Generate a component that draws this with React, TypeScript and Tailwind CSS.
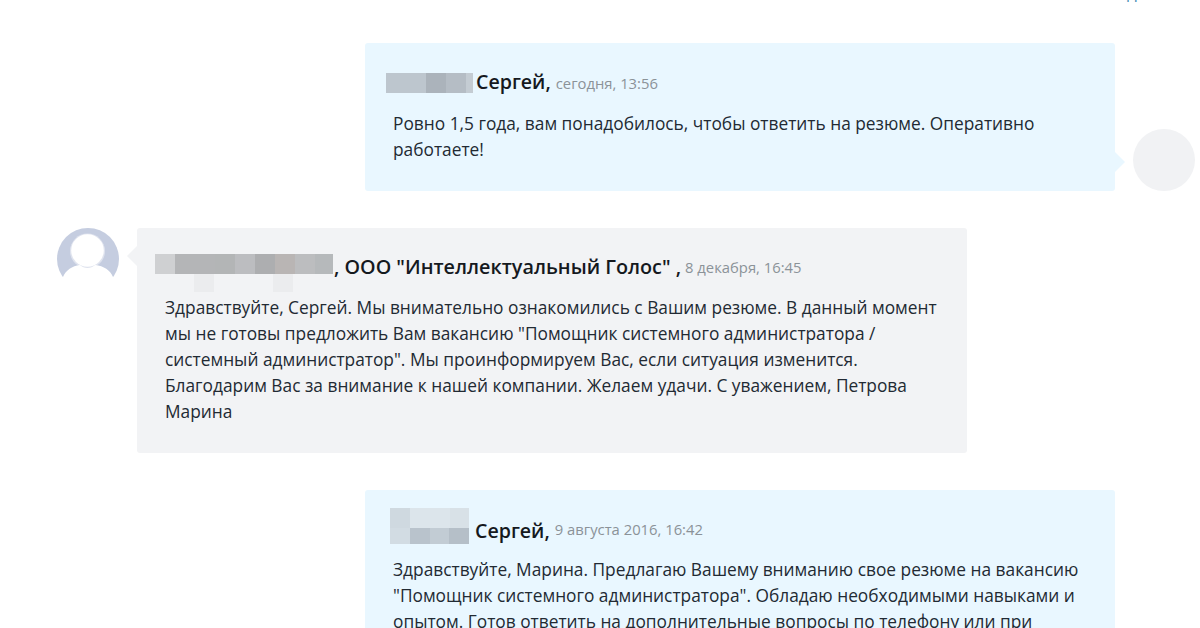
const cellClass = "h-full shrink-0";

interface PixelBlurProps {
  rows: { height: number; cells: [number, string][] }[];
}

function PixelBlur({ rows }: PixelBlurProps) {
  return (
    <div className="flex shrink-0 flex-col">
      {rows.map((row, i) => (
        <div key={i} className="flex" style={{ height: row.height }}>
          {row.cells.map(([width, color], j) => (
            <div key={j} className={cellClass} style={{ width, backgroundColor: color }} />
          ))}
        </div>
      ))}
    </div>
  );
}

function UserAvatar() {
  return (
    <svg width="62" height="62" viewBox="0 0 62 62" className="shrink-0">
      <circle cx="31" cy="31" r="31" fill="#c5cde0" />
      <circle cx="30.5" cy="23" r="17.5" fill="#dfe3ee" />
      <circle cx="30.5" cy="22.5" r="16.3" fill="#fff" />
      <path d="M6 49 C9 42 15 38 23 37 C27 41 34 41 38 37 C47 38 53 42 56 49 L64 64 L-2 64 Z" fill="#fff" />
    </svg>
  );
}

export default function App() {
  return (
    <div className="relative h-[628px] w-[1200px] overflow-hidden bg-white font-['Open_Sans',sans-serif] text-[17.32px] leading-[26px] text-[#222a33]">
      <span className="absolute left-[1127px] top-[-20px] text-[17px] text-[#4a90b8]">д</span>

      <div className="flex flex-col pt-[43px]">
        {/* own message */}
        <div className="ml-[365px] flex items-start">
          <div className="relative h-[148px] w-[750px] rounded-[3px] bg-[#e9f7ff] pl-[21px] pt-[26px]">
            <div className="flex h-[28px] items-center">
              <PixelBlur
                rows={[
                  {
                    height: 20,
                    cells: [
                      [40, "#bdc6ce"],
                      [20, "#abb3bb"],
                      [20, "#b5bdc5"],
                      [7, "#c4ccd3"],
                    ],
                  },
                ]}
              />
              <span className="ml-[3px] mt-[-3px] text-[19.6px] font-semibold text-[#15191e]">Сергей,</span>
              <span className="ml-[5px] mt-[-1px] text-[14.8px] text-[#8b9298]">сегодня, 13:56</span>
            </div>
            <p className="mt-[13px] pl-[7px] pr-[20px]">
              Ровно 1,5 года, вам понадобилось, чтобы ответить на резюме. Оперативно работаете!
            </p>
            <div className="absolute left-[750px] top-[109px] h-0 w-0 border-y-[10px] border-l-[10px] border-y-transparent border-l-[#e9f7ff]" />
          </div>
          <div className="ml-[18px] mt-[86px] h-[62px] w-[62px] shrink-0 rounded-full bg-[#f1f2f4]" />
        </div>

        {/* employer reply */}
        <div className="ml-[57px] mt-[37px] flex items-start">
          <UserAvatar />
          <div className="relative ml-[18px] h-[225px] w-[830px] rounded-[3px] bg-[#f2f3f5] pl-[18px] pt-[26px]">
            <div className="absolute left-[-10px] top-[18px] h-0 w-0 border-y-[10px] border-r-[10px] border-y-transparent border-r-[#f2f3f5]" />
            <div className="flex h-[20px] items-center">
              <div className="relative h-[20px] shrink-0">
                <PixelBlur
                  rows={[
                    {
                      height: 20,
                      cells: [
                        [20, "#cfd0d2"],
                        [40, "#b4b5b7"],
                        [20, "#b3b5b6"],
                        [20, "#bcbdc0"],
                        [20, "#adaeb0"],
                        [20, "#b9b5b4"],
                        [20, "#bcbdbf"],
                        [18, "#b6b9bb"],
                      ],
                    },
                  ]}
                />
                <div className="absolute left-[39px] top-[20px] h-[18px] w-[20px] bg-[#ebecee]" />
                <div className="absolute left-[118px] top-[20px] h-[18px] w-[20px] bg-[#ebecee]" />
              </div>
              <span className="ml-[1px] mt-[5px] text-[19.8px] font-semibold text-[#15191e]">, ООО "Интеллектуальный Голос" ,</span>
              <span className="ml-[4px] mt-[5px] text-[14.8px] text-[#8b9298]">8 декабря, 16:45</span>
            </div>
            <p className="mt-[20px] w-[790px] pl-[10px]">
              Здравствуйте, Сергей. Мы внимательно ознакомились с Вашим резюме. В данный момент мы не готовы предложить Вам вакансию "Помощник системного администратора / системный администратор". Мы проинформируем Вас, если ситуация изменится. Благодарим Вас за внимание к нашей компании. Желаем удачи. С уважением, Петрова Марина
            </p>
          </div>
        </div>

        {/* own first message */}
        <div className="ml-[365px] mt-[37px] h-[200px] w-[750px] shrink-0 rounded-[3px] bg-[#e9f7ff] pl-[25px] pt-[18px]">
          <div className="flex h-[36px] items-end">
            <PixelBlur
              rows={[
                {
                  height: 20,
                  cells: [
                    [20, "#cfd9e0"],
                    [40, "#dce5eb"],
                    [19, "#d8e1e7"],
                  ],
                },
                {
                  height: 16,
                  cells: [
                    [20, "#d2dce3"],
                    [20, "#b9c3cc"],
                    [19, "#c2ccd4"],
                    [20, "#b5bfc8"],
                  ],
                },
              ]}
            />
            <span className="ml-[6px] text-[19.6px] font-semibold leading-[26px] text-[#15191e]">Сергей,</span>
            <span className="mb-[2px] ml-[5px] text-[14.8px] leading-[26px] text-[#8b9298]">9 августа 2016, 16:42</span>
          </div>
          <p className="mt-[12px] w-[700px] pl-[3px]">
            Здравствуйте, Марина. Предлагаю Вашему вниманию свое резюме на вакансию "Помощник системного администратора". Обладаю необходимыми навыками и опытом. Готов ответить на дополнительные вопросы по телефону или при
          </p>
        </div>
      </div>
    </div>
  );
}
